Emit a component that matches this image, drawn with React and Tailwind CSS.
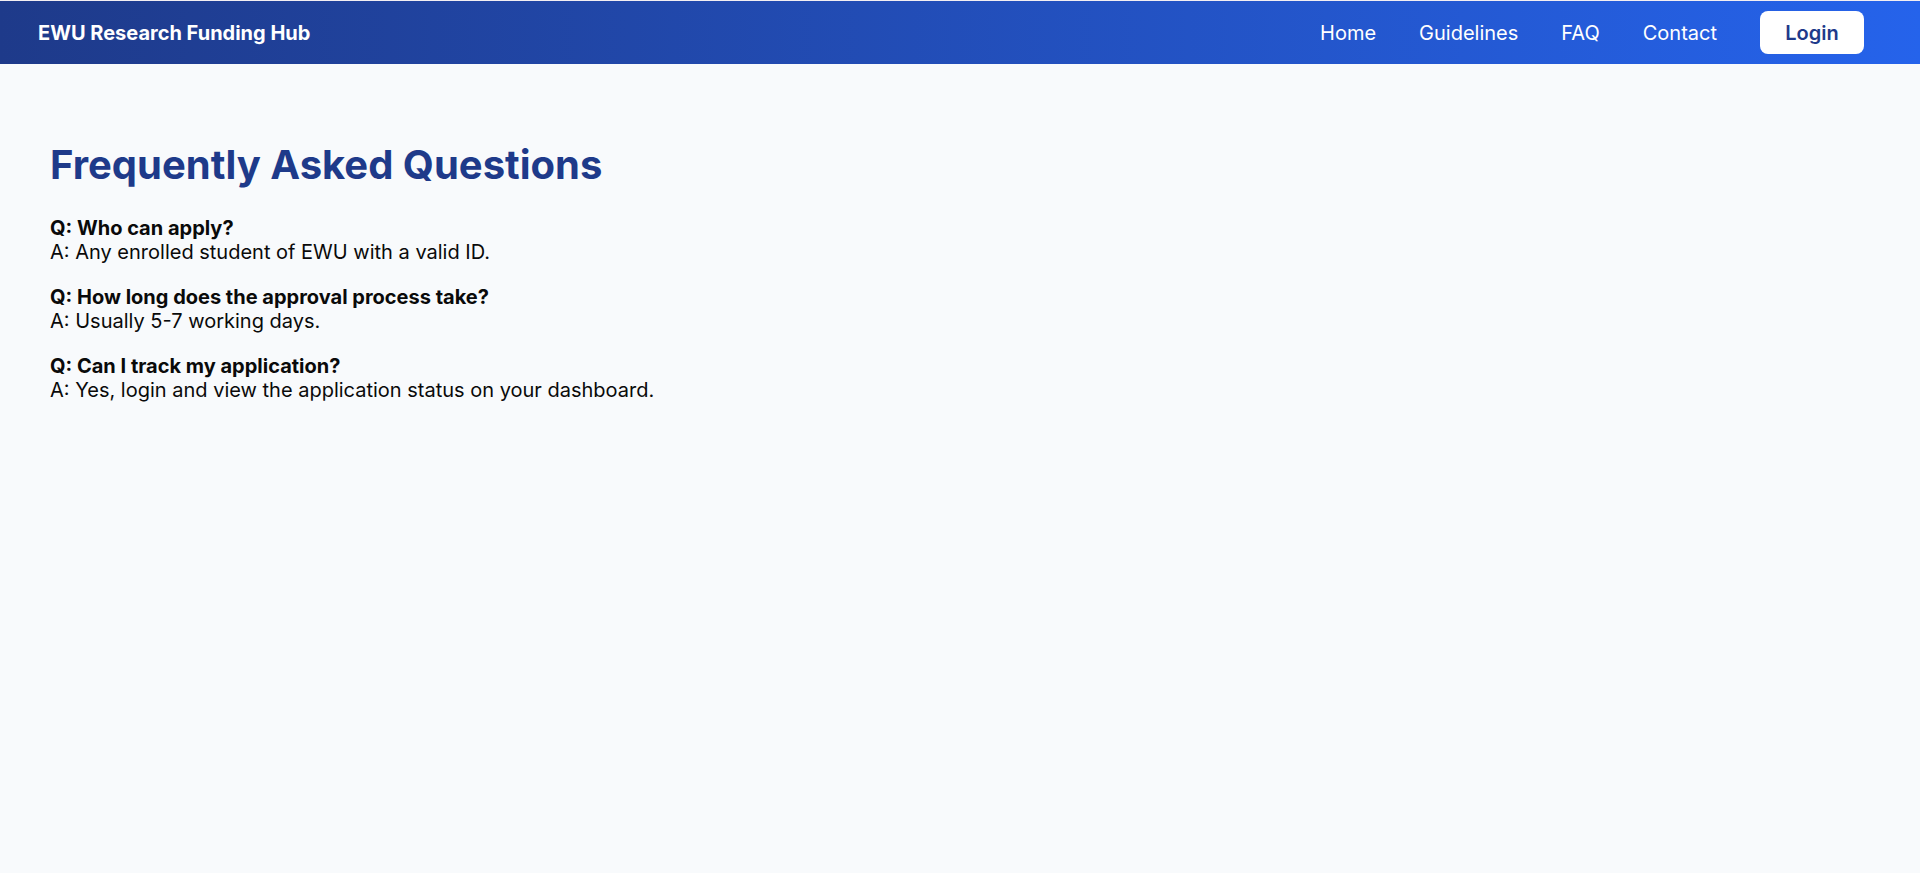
export default function App() {
  const faqs = [
    { q: "Q: Who can apply?", a: "A: Any enrolled student of EWU with a valid ID." },
    { q: "Q: How long does the approval process take?", a: "A: Usually 5-7 working days." },
    { q: "Q: Can I track my application?", a: "A: Yes, login and view the application status on your dashboard." },
  ];
  return (
    <div className="min-h-[873px] bg-[#f8fafc] flex flex-col" style={{ fontFamily: "Inter, 'Noto Sans', sans-serif" }}>
      <div className="h-[1px] bg-[#f3eef2]" />
      <header className="h-[63px] bg-gradient-to-r from-[#1e3a8a] to-[#2563eb] flex items-center pl-[38px] pr-[56px]">
        <div className="text-white font-bold text-[20px] leading-7">EWU Research Funding Hub</div>
        <nav className="ml-auto flex items-center gap-[43px]">
          <a className="text-white text-[20px] leading-7">Home</a>
          <a className="text-white text-[20px] leading-7">Guidelines</a>
          <a className="text-white text-[20px] leading-7">FAQ</a>
          <a className="text-white text-[20px] leading-7">Contact</a>
          <button className="bg-white text-[#1e3a8a] font-semibold text-[20px] leading-7 w-[104px] h-[43px] rounded-lg">Login</button>
        </nav>
      </header>
      <main className="pt-[77px] pl-[50px]">
        <h1 className="text-[40px] leading-[48px] font-bold text-[#1e3a8a] mb-[27px]">Frequently Asked Questions</h1>
        {faqs.map((f) => (
          <div key={f.q} className="mb-[21px] text-[20px] leading-6 text-[#0a0a0a]">
            <div className="font-bold">{f.q}</div>
            <div>{f.a}</div>
          </div>
        ))}
      </main>
    </div>
  );
}
